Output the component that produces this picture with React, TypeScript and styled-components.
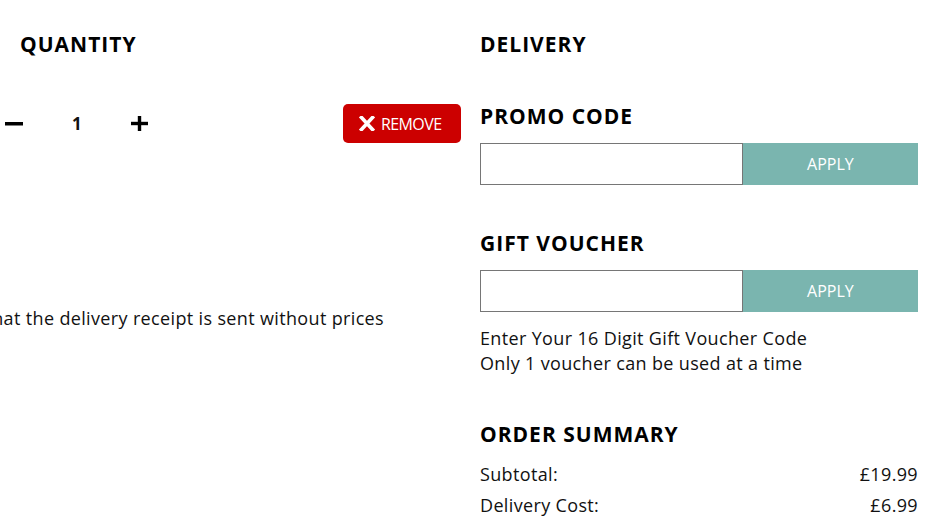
import styled, { createGlobalStyle } from "styled-components";

const GlobalStyle = createGlobalStyle`
  html, body {
    margin: 0;
    padding: 0;
    background: #fff;
  }
  body {
    font-family: "Open Sans", "Liberation Sans", sans-serif;
    color: #111;
  }
`;

const Page = styled.div`
  display: flex;
  gap: 19px;
  padding-top: 32px;
  width: 918px;
`;

const LeftColumn = styled.div`
  width: 461px;
  flex-shrink: 0;
  overflow: hidden;
`;

const RightColumn = styled.div`
  width: 438px;
  flex-shrink: 0;
`;

const Heading = styled.h3<{ $indent?: number; $top?: number }>`
  margin: ${({ $top }) => $top ?? 0}px 0 0 ${({ $indent }) => $indent ?? 0}px;
  font-size: 21px;
  line-height: 24px;
  font-weight: 700;
  letter-spacing: 1px;
  color: #000;
`;

const QuantityRow = styled.div`
  display: flex;
  align-items: center;
  margin-top: 48px;
  height: 39px;
`;

const Stepper = styled.div`
  display: flex;
  align-items: center;
  gap: 49px;
  margin-left: 5px;
`;

const StepButton = styled.button`
  display: flex;
  align-items: center;
  justify-content: center;
  width: 18px;
  height: 18px;
  padding: 0;
  border: none;
  background: none;
  cursor: pointer;
`;

const Count = styled.span`
  font-size: 17px;
  font-weight: 700;
  color: #111;
`;

const RemoveButton = styled.button`
  display: flex;
  align-items: center;
  gap: 6px;
  margin-left: auto;
  height: 39px;
  width: 118px;
  padding: 0 0 0 16px;
  border: none;
  border-radius: 5px;
  background: #cc0000;
  color: #fff;
  font-family: "Open Sans", "Liberation Sans", sans-serif;
  font-size: 16px;
  letter-spacing: -0.6px;
  cursor: pointer;
`;

const NoteClip = styled.div`
  display: flex;
  justify-content: flex-end;
  width: 384px;
  overflow: hidden;
  margin-top: 163px;
`;

const Note = styled.span`
  flex-shrink: 0;
  white-space: nowrap;
  font-size: 18px;
  line-height: 25px;
  letter-spacing: 0.35px;
  color: #111;
`;

const CodeForm = styled.div`
  display: flex;
  height: 42px;
  margin-top: 15px;
`;

const CodeInput = styled.input`
  box-sizing: border-box;
  width: 60%;
  height: 100%;
  margin: 0;
  padding: 0 10px;
  border: 1px solid #767676;
  font-family: "Open Sans", "Liberation Sans", sans-serif;
  font-size: 16px;
  outline: 0;
`;

const ApplyButton = styled.button`
  width: 40%;
  height: 100%;
  border: none;
  background: #7ab5af;
  color: #fff;
  font-family: "Open Sans", "Liberation Sans", sans-serif;
  font-size: 16px;
  cursor: pointer;
`;

const HelpText = styled.p`
  margin: 14px 0 0;
  font-size: 18px;
  line-height: 25px;
  letter-spacing: 0.35px;
  color: #111;
`;

const SummaryList = styled.div`
  margin-top: 13px;
`;

const SummaryRow = styled.div`
  display: flex;
  justify-content: space-between;
  font-size: 18px;
  line-height: 31px;
  letter-spacing: 0.35px;
  color: #111;
`;

const MinusIcon = () => (
  <svg width="18" height="4" viewBox="0 0 18 4">
    <rect x="0" y="0" width="18" height="3.5" fill="#000" />
  </svg>
);

const PlusIcon = () => (
  <svg width="17" height="15" viewBox="0 0 17 15">
    <rect x="0" y="5.8" width="17" height="3.4" fill="#000" />
    <rect x="6.8" y="0" width="3.4" height="15" fill="#000" />
  </svg>
);

const TimesIcon = () => (
  <svg width="16" height="15" viewBox="0 0 16 15">
    <path
      d="M2.5 1.5 L13.5 13.5 M13.5 1.5 L2.5 13.5"
      stroke="#fff"
      strokeWidth="3.6"
      strokeLinecap="square"
    />
  </svg>
);

const summary = [
  { label: "Subtotal:", value: "£19.99" },
  { label: "Delivery Cost:", value: "£6.99" },
];

export default function App() {
  return (
    <>
      <GlobalStyle />
      <Page>
        <LeftColumn>
          <Heading $indent={20}>QUANTITY</Heading>
          <QuantityRow>
            <Stepper>
              <StepButton aria-label="Decrease">
                <MinusIcon />
              </StepButton>
              <Count>1</Count>
              <StepButton aria-label="Increase">
                <PlusIcon />
              </StepButton>
            </Stepper>
            <RemoveButton>
              <TimesIcon />
              REMOVE
            </RemoveButton>
          </QuantityRow>
          <NoteClip>
            <Note>This order is a gift, please ensure that the delivery receipt is sent without prices</Note>
          </NoteClip>
        </LeftColumn>

        <RightColumn>
          <Heading>DELIVERY</Heading>

          <Heading $top={48}>PROMO CODE</Heading>
          <CodeForm>
            <CodeInput type="text" />
            <ApplyButton>APPLY</ApplyButton>
          </CodeForm>

          <Heading $top={46}>GIFT VOUCHER</Heading>
          <CodeForm>
            <CodeInput type="text" />
            <ApplyButton>APPLY</ApplyButton>
          </CodeForm>
          <HelpText>
            Enter Your 16 Digit Gift Voucher Code
            <br />
            Only 1 voucher can be used at a time
          </HelpText>

          <Heading $top={46}>ORDER SUMMARY</Heading>
          <SummaryList>
            {summary.map((row) => (
              <SummaryRow key={row.label}>
                <span>{row.label}</span>
                <span>{row.value}</span>
              </SummaryRow>
            ))}
          </SummaryList>
        </RightColumn>
      </Page>
    </>
  );
}
